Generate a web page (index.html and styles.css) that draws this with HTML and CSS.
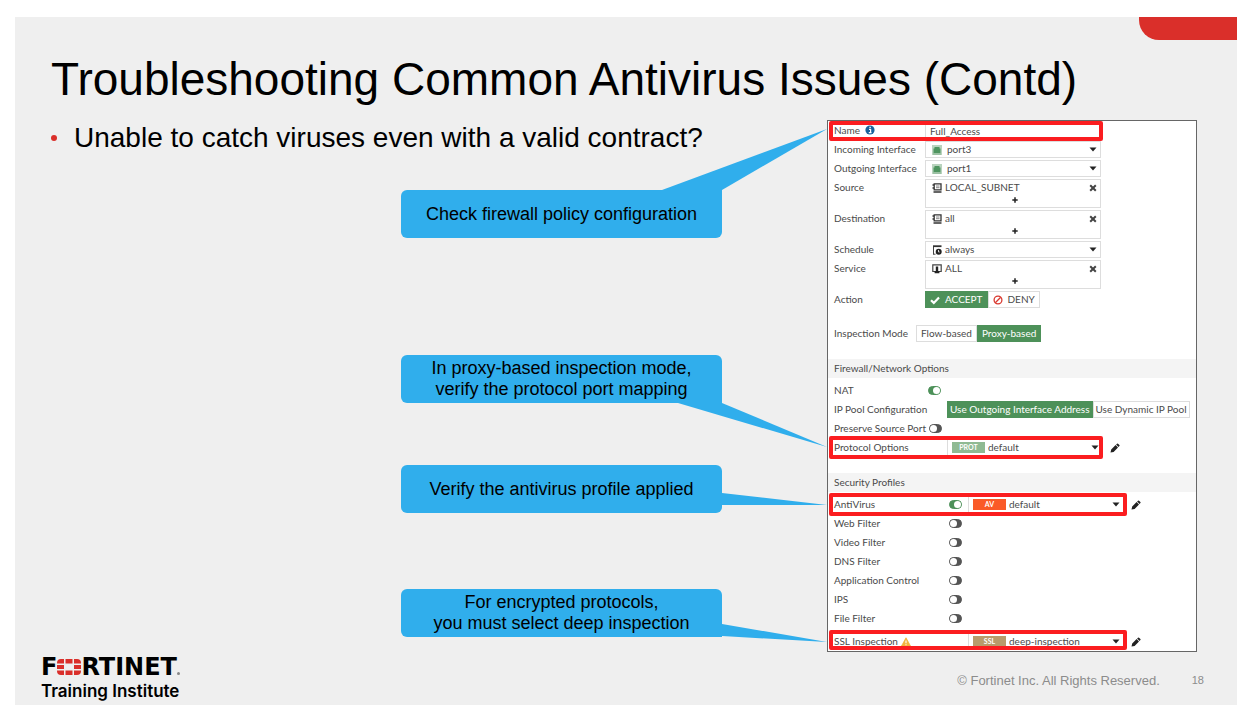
FILE: index.html
```html
<!DOCTYPE html>
<html lang="en">
<head>
<meta charset="utf-8">
<title>Troubleshooting Common Antivirus Issues (Contd)</title>
<link rel="stylesheet" href="styles.css">
</head>
<body>
<svg class="defs" aria-hidden="true">
  <symbol id="caret" viewBox="0 0 8 5"><path d="M0.5 0.5h7L4 4.5z" fill="#222"/></symbol>
  <symbol id="port" viewBox="0 0 10 10"><rect width="10" height="10" fill="#b9d3be"/><path d="M1.500 3.500h1V2h5v1.500h1V8h-7z" fill="#4f9560"/><path d="M1 9h8" stroke="#7fae88" stroke-width="1"/></symbol>
  <symbol id="address" viewBox="0 0 10 10"><path d="M2.200 .8h6.800v6H2.200z" fill="none" stroke="#333" stroke-width="1.300"/><path d="M4 3h3.500M4 4.700h3.500" stroke="#666" stroke-width=".8"/><path d="M.5 2h1.500M.5 5h1.500M1.500 9h8" stroke="#333" stroke-width="1.400"/></symbol>
  <symbol id="schedule" viewBox="0 0 10 10"><path d="M1.500 9.200V1.500h7.500M1 9.200h2.500" fill="none" stroke="#444" stroke-width="1"/><path d="M1 1.200h8.500" stroke="#333" stroke-width="1.800"/><circle cx="6.700" cy="6.700" r="3" fill="#222"/><path d="M6.500 5v2h1.200" fill="none" stroke="#fff" stroke-width=".8"/></symbol>
  <symbol id="service" viewBox="0 0 10 10"><path d="M3 7.500H.8V.8h8.400v6.700H7" fill="none" stroke="#444" stroke-width="1.200"/><path d="M3.800 2.500h2.400V7h1.200v2.300H2.600V7h1.200z" fill="#222"/></symbol>
  <symbol id="remove" viewBox="0 0 8 8"><path d="M1.200 1.200l5.600 5.600M6.800 1.200L1.200 6.800" stroke="#444" stroke-width="2"/></symbol>
  <symbol id="plus" viewBox="0 0 6 6"><path d="M3 0.300v5.400M0.300 3h5.400" stroke="#222" stroke-width="1.500"/></symbol>
  <symbol id="pencil" viewBox="0 0 10 10"><path d="M.5 9.500l.7-3 4.400-4.400 2.400 2.400-4.400 4.400zM6.100 1.600l.9-.9q.5-.5 1 0l1.400 1.400q.5.5 0 1l-.9.9z" fill="#222"/></symbol>
</svg>

<main class="slide">
  <div class="tab" aria-hidden="true"></div>
  <h1 class="title">Troubleshooting Common Antivirus Issues (Contd)</h1>

  <div class="content">
    <section class="notes">
      <ul class="bullets"><li>Unable to catch viruses even with a valid contract?</li></ul>
      <div class="callouts">
        <p class="callout callout-policy">Check firewall policy configuration
          <svg class="tail tail-up" viewBox="0 0 165 61" aria-hidden="true"><path d="M0 61L165 0 60 61z"/></svg></p>
        <p class="callout callout-proxy">In proxy-based inspection mode,<br>verify the protocol port mapping
          <svg class="tail tail-down" viewBox="0 0 149 44" aria-hidden="true"><path d="M0 0h44L149 44z"/></svg></p>
        <p class="callout callout-antivirus">Verify the antivirus profile applied
          <svg class="tail tail-side" viewBox="0 0 105 53" aria-hidden="true"><path d="M0 28L105 40 0 40z"/></svg></p>
        <p class="callout callout-ssl">For encrypted protocols,<br>you must select deep inspection
          <svg class="tail tail-side" viewBox="0 0 105 53" aria-hidden="true"><path d="M0 35L105 53 0 47z"/></svg></p>
      </div>
    </section>

    <form class="panel">
      <div class="row marked marked-top">
        <label class="label" for="name">Name
          <svg class="info" viewBox="0 0 10 10" aria-hidden="true"><circle cx="5" cy="5" r="4.600" fill="#17629b"/><path d="M4 4.300h1.600v3.200M3.800 7.700h2.700M4.400 2.400h1.400" stroke="#fff" stroke-width="1.200" fill="none"/></svg></label>
        <input class="field text" id="name" type="text" value="Full_Access">
      </div>
      <div class="row">
        <label class="label" for="incoming">Incoming Interface</label>
        <div class="field port"><svg class="icon"><use href="#port"/></svg><select id="incoming"><option>port3</option></select><svg class="caret"><use href="#caret"/></svg></div>
      </div>
      <div class="row">
        <label class="label" for="outgoing">Outgoing Interface</label>
        <div class="field port"><svg class="icon"><use href="#port"/></svg><select id="outgoing"><option>port1</option></select><svg class="caret"><use href="#caret"/></svg></div>
      </div>
      <div class="row tall">
        <span class="label">Source</span>
        <div class="field multi">
          <div class="entry"><svg class="icon"><use href="#address"/></svg><span>LOCAL_SUBNET</span><button type="button" class="remove" aria-label="Remove LOCAL_SUBNET"><svg><use href="#remove"/></svg></button></div>
          <button type="button" class="add" aria-label="Add source"><svg><use href="#plus"/></svg></button>
        </div>
      </div>
      <div class="row tall">
        <span class="label">Destination</span>
        <div class="field multi">
          <div class="entry"><svg class="icon"><use href="#address"/></svg><span>all</span><button type="button" class="remove" aria-label="Remove all"><svg><use href="#remove"/></svg></button></div>
          <button type="button" class="add" aria-label="Add destination"><svg><use href="#plus"/></svg></button>
        </div>
      </div>
      <div class="row">
        <label class="label" for="schedule-select">Schedule</label>
        <div class="field"><svg class="icon"><use href="#schedule"/></svg><select id="schedule-select"><option>always</option></select><svg class="caret"><use href="#caret"/></svg></div>
      </div>
      <div class="row tall">
        <span class="label">Service</span>
        <div class="field multi">
          <div class="entry"><svg class="icon"><use href="#service"/></svg><span>ALL</span><button type="button" class="remove" aria-label="Remove ALL"><svg><use href="#remove"/></svg></button></div>
          <button type="button" class="add" aria-label="Add service"><svg><use href="#plus"/></svg></button>
        </div>
      </div>
      <div class="row">
        <span class="label">Action</span>
        <div class="segments" role="radiogroup" aria-label="Action">
          <label class="segment"><input type="radio" name="action" checked><svg class="mark" viewBox="0 0 10 10"><path d="M1 5.200l2.800 2.700L9 2.500" fill="none" stroke="#fff" stroke-width="2.200"/></svg>ACCEPT</label>
          <label class="segment"><input type="radio" name="action"><svg class="mark" viewBox="0 0 10 10"><circle cx="5" cy="5" r="3.900" fill="none" stroke="#d9382f" stroke-width="1.300"/><path d="M2.300 7.700l5.400-5.400" stroke="#d9382f" stroke-width="1.300"/></svg>DENY</label>
        </div>
      </div>
      <div class="row spaced narrow">
        <span class="label">Inspection Mode</span>
        <div class="segments" role="radiogroup" aria-label="Inspection Mode">
          <label class="segment"><input type="radio" name="mode">Flow-based</label>
          <label class="segment"><input type="radio" name="mode" checked>Proxy-based</label>
        </div>
      </div>

      <h2 class="section">Firewall/Network Options</h2>
      <div class="row">
        <label class="label" for="nat">NAT</label>
        <input class="toggle inset" id="nat" type="checkbox" checked>
      </div>
      <div class="row wide">
        <span class="label">IP Pool Configuration</span>
        <div class="segments compact" role="radiogroup" aria-label="IP Pool Configuration">
          <label class="segment"><input type="radio" name="pool" checked>Use Outgoing Interface Address</label>
          <label class="segment"><input type="radio" name="pool">Use Dynamic IP Pool</label>
        </div>
      </div>
      <div class="row">
        <label class="label" for="preserve">Preserve Source Port</label>
        <input class="toggle inset" id="preserve" type="checkbox">
      </div>
      <div class="row wide marked">
        <label class="label" for="protocol">Protocol Options</label>
        <div class="field profile"><span class="badge prot">PROT</span><select id="protocol"><option>default</option></select><svg class="caret"><use href="#caret"/></svg></div>
        <button type="button" class="edit" aria-label="Edit protocol options"><svg><use href="#pencil"/></svg></button>
      </div>

      <h2 class="section">Security Profiles</h2>
      <div class="row profiles marked marked-wide">
        <label class="label" for="av">AntiVirus</label>
        <input class="toggle" id="av" type="checkbox" checked>
        <div class="field profile"><span class="badge av">AV</span><select aria-label="AntiVirus profile"><option>default</option></select><svg class="caret"><use href="#caret"/></svg></div>
        <button type="button" class="edit" aria-label="Edit antivirus profile"><svg><use href="#pencil"/></svg></button>
      </div>
      <div class="row profiles"><label class="label" for="web">Web Filter</label><input class="toggle" id="web" type="checkbox"></div>
      <div class="row profiles"><label class="label" for="video">Video Filter</label><input class="toggle" id="video" type="checkbox"></div>
      <div class="row profiles"><label class="label" for="dns">DNS Filter</label><input class="toggle" id="dns" type="checkbox"></div>
      <div class="row profiles"><label class="label" for="app">Application Control</label><input class="toggle" id="app" type="checkbox"></div>
      <div class="row profiles"><label class="label" for="ips">IPS</label><input class="toggle" id="ips" type="checkbox"></div>
      <div class="row profiles"><label class="label" for="file">File Filter</label><input class="toggle" id="file" type="checkbox"></div>
      <div class="row ssl-row marked marked-wide marked-bottom">
        <label class="label" for="ssl">SSL Inspection
          <svg class="warning" viewBox="0 0 10 10" aria-hidden="true"><path d="M5 .8L9.600 9.200H.4z" fill="#f3b33d" stroke="#f3b33d" stroke-linejoin="round" stroke-width=".8"/><path d="M5 3.500v2.800M5 7.200v1.100" stroke="#fff" stroke-width="1.100"/></svg></label>
        <div class="field profile"><span class="badge ssl">SSL</span><select id="ssl"><option>deep-inspection</option></select><svg class="caret"><use href="#caret"/></svg></div>
        <button type="button" class="edit" aria-label="Edit SSL inspection"><svg><use href="#pencil"/></svg></button>
      </div>
    </form>
  </div>

  <footer class="footer">
    <div class="brand">
      <div class="wordmark"><span>F</span><svg class="emblem" viewBox="0 0 24 16" role="img" aria-label="O"><g fill="#da2f2a"><path d="M0 4.500V4q0-4 4-4h3v4.500zM8.500 0h7v4.500h-7zM17 0h3q4 0 4 4v.5h-7zM0 6h7v4H0zM17 6h7v4h-7zM0 11.500h7V16H4q-4 0-4-4zM8.500 11.500h7V16h-7zM17 11.500h7v.5q0 4-4 4h-3z"/></g></svg><span>RTINET</span><i class="dot"></i></div>
      <div class="institute">Training Institute</div>
    </div>
    <div class="legal"><span>© Fortinet Inc. All Rights Reserved.</span><span class="page">18</span></div>
  </footer>
</main>
</body>
</html>
```
FILE: styles.css
```css
* { box-sizing: border-box; }

body {
  margin: 17px 1px 17px 15px;
  background: #fff;
  color: #000;
  font-family: "Liberation Sans", Arial, sans-serif;
}

.defs { position: absolute; width: 0; height: 0; }

.slide {
  position: relative;
  padding-top: 35px;
  background: #efefef;
}

.tab {
  position: absolute;
  top: 0;
  right: 0;
  width: 98px;
  height: 23px;
  border-bottom-left-radius: 20px;
  background: #da2f2a;
}

.title {
  margin: 0 36px 14px;
  font-size: 46px;
  font-weight: 400;
  line-height: 54px;
}

.content {
  display: grid;
  grid-template-columns: minmax(0, 1fr) 370px;
  padding: 0 40px 0 36px;
}

.bullets {
  margin: 0;
  padding: 0 0 0 23px;
  list-style: none;
  font-size: 28px;
  line-height: 36px;
}

.bullets li { display: flex; align-items: center; }

.bullets li::before {
  content: "";
  width: 6px;
  height: 6px;
  margin: 0 17px 0 -23px;
  border-radius: 50%;
  background: #da2f2a;
}

.callouts {
  display: flex;
  flex-direction: column;
  align-items: flex-end;
  padding: 34px 105px 0 0;
}

.callout {
  position: relative;
  display: flex;
  flex-direction: column;
  justify-content: center;
  width: 321px;
  min-height: 48px;
  margin: 0;
  border-radius: 6px;
  background: #30aeec;
  font-size: 18px;
  line-height: 21px;
  text-align: center;
}

.callout-policy { border-top-right-radius: 0; }
.callout-proxy { margin-top: 117px; border-bottom-right-radius: 0; }
.callout-antivirus { margin-top: 62px; }
.callout-ssl { margin-top: 76px; border-bottom-right-radius: 0; }

.tail { position: absolute; fill: #30aeec; }
.tail-up { right: -105px; bottom: 100%; width: 165px; height: 61px; }
.tail-down { right: -105px; top: 100%; width: 149px; height: 44px; }
.tail-side { left: 100%; top: 0; width: 105px; height: 53px; }

.panel {
  display: flex;
  flex-direction: column;
  gap: 2px;
  padding: 1px 0;
  border: 1px solid #666;
  background: #fff;
  color: #4a4a4a;
  font-family: Lato, sans-serif;
  font-size: 10px;
  line-height: 15px;
}

.row {
  --label: 91px;
  position: relative;
  display: flex;
  align-items: center;
  min-height: 17px;
  padding-left: 6px;
}

.row.narrow { --label: 82px; }
.row.wide { --label: 113px; }
.row.profiles { --label: 115px; }
.row.ssl-row { --label: 134px; margin-top: 4px; }
.row.spaced { margin-top: 15px; }
.row.tall { align-items: flex-start; }

.label { flex: 0 0 var(--label); white-space: nowrap; }
.tall .label { padding-top: 1px; }
.info { width: 10px; height: 10px; margin-left: 2px; vertical-align: -1px; }
.warning { width: 10px; height: 10px; vertical-align: -2px; }

.marked::after {
  content: "";
  position: absolute;
  inset: -3px 93px -3px 1px;
  border: 4px solid #fb1d20;
  border-radius: 2px;
  pointer-events: none;
}

.marked-top::after { top: -1px; bottom: -2px; }
.marked-wide::after { right: 69px; }
.marked-bottom::after { bottom: 0; }

.field {
  display: flex;
  align-items: center;
  width: 176px;
  height: 17px;
  padding: 0 3px 0 6px;
  border: 1px solid #ddd;
  background: #fff;
}

.text, select {
  color: inherit;
  font: inherit;
}

.text { padding: 0 4px; outline: 0; }

select {
  flex: 1;
  min-width: 0;
  height: 15px;
  padding: 0;
  border: 0;
  background: none;
  appearance: none;
}

.icon { flex: none; width: 10px; height: 10px; margin-right: 3px; }
.port .icon { margin-right: 5px; }
.caret { flex: none; width: 8px; height: 5px; }

.multi { display: block; height: 29px; }
.entry { display: flex; align-items: center; height: 15px; }

button {
  display: flex;
  padding: 0;
  border: 0;
  background: none;
}

.remove { margin-left: auto; }
.remove svg { width: 8px; height: 8px; }
.add { margin: 2px auto 0; }
.add svg { width: 6px; height: 6px; }
.edit { margin-left: 7px; }
.edit svg { width: 10px; height: 10px; }

.segments { display: flex; height: 17px; }

.segment {
  display: flex;
  align-items: center;
  padding: 0 4px;
  border: 1px solid #ddd;
  background: #fff;
  white-space: nowrap;
}

.compact .segment { padding: 0 2px; }
.segment input { position: absolute; opacity: 0; }
.segment:has(:checked) { border-color: #4d9159; background: #4d9159; color: #fff; }
.mark { width: 10px; height: 10px; margin-right: 5px; }

.section {
  margin: 15px 0 2px;
  padding-left: 6px;
  background: #f4f4f4;
  font-size: 10px;
  font-weight: 400;
  line-height: 19px;
}

.toggle {
  display: flex;
  flex: none;
  width: 13px;
  height: 9px;
  margin: 0;
  border: 1px solid #555;
  border-radius: 5px;
  background: #555;
  appearance: none;
}

.toggle::before {
  content: "";
  width: 7px;
  height: 7px;
  border-radius: 50%;
  background: #fff;
}

.toggle:checked { justify-content: flex-end; border-color: #4d9159; background: #4d9159; }
.inset { margin-left: 3px; }

.profile { width: 156px; padding-left: 4px; }
.toggle + .profile { margin-left: 6px; }

.badge {
  flex: none;
  width: 33px;
  height: 11px;
  margin-right: 3px;
  color: #fff;
  font-size: 7px;
  font-weight: 700;
  line-height: 11px;
  text-align: center;
}

.prot { background: #8fba93; }
.av { background: #fa5a28; }
.ssl { background: #b99b6b; }

.footer {
  display: flex;
  justify-content: space-between;
  padding: 5px 33px 0 26px;
}

.wordmark {
  display: flex;
  align-items: center;
  height: 20px;
  font-family: "DejaVu Sans", sans-serif;
  font-size: 24px;
  font-weight: 700;
  line-height: 20px;
}

.emblem { width: 24px; height: 16px; }
.dot { align-self: flex-end; width: 3px; height: 3px; margin-bottom: 2px; border-radius: 50%; background: #888; }

.institute {
  font-family: Inter, sans-serif;
  font-size: 17px;
  font-weight: 600;
  line-height: 28px;
}

.legal {
  display: flex;
  align-items: flex-start;
  gap: 32px;
  padding-top: 16px;
  color: #8c8c8c;
  font-size: 13px;
  line-height: 16px;
}

.page { font-size: 11px; line-height: 14px; }
```
